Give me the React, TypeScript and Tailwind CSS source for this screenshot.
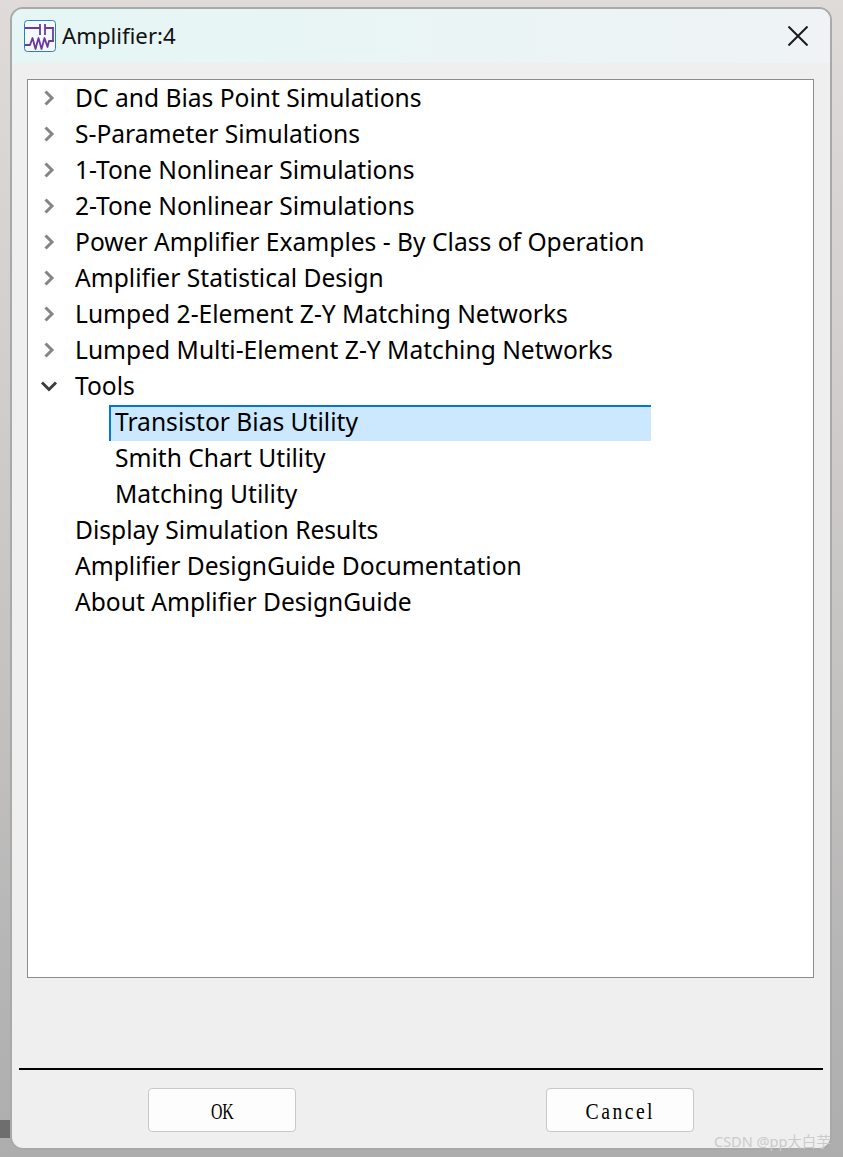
import { ReactNode } from 'react'

const collapsedTop = [
  'DC and Bias Point Simulations',
  'S-Parameter Simulations',
  '1-Tone Nonlinear Simulations',
  '2-Tone Nonlinear Simulations',
  'Power Amplifier Examples - By Class of Operation',
  'Amplifier Statistical Design',
  'Lumped 2-Element Z-Y Matching Networks',
  'Lumped Multi-Element Z-Y Matching Networks',
]

const leafItems = ['Display Simulation Results', 'Amplifier DesignGuide Documentation', 'About Amplifier DesignGuide']

function AppIcon() {
  return (
    <svg width="32" height="32" viewBox="0 0 32 32" fill="none" className="shrink-0">
      <rect x="0.5" y="0.5" width="31" height="31" rx="3" fill="#f4fafc" stroke="#2a7fc0" />
      <g stroke="#6a3aa0" strokeWidth="1.8">
        <path d="M1 8H16M16 4V15M21 4V15M21 8H29V21" />
        <path d="M1 25H6L8.5 18L11.5 29L14.5 18L17.5 29L20.5 18L23.5 27L25 21H30" strokeLinejoin="round" />
      </g>
    </svg>
  )
}

function ChevronRight() {
  return (
    <svg width="12" height="16" viewBox="0 0 12 16" fill="none">
      <path d="M2.5 1.5L9 8L2.5 14.5" stroke="#858585" strokeWidth="3" />
    </svg>
  )
}

function ChevronDown() {
  return (
    <svg width="18" height="12" viewBox="0 0 18 12" fill="none">
      <path d="M2 2.5L9 9.5L16 2.5" stroke="#3c3c3c" strokeWidth="3" />
    </svg>
  )
}

function TreeRow({ icon, children }: { icon?: ReactNode; children: ReactNode }) {
  return (
    <div className="flex h-9 items-center">
      <div className="flex w-[47px] shrink-0 items-center justify-center pr-[6px]">{icon}</div>
      <span>{children}</span>
    </div>
  )
}

function DialogButton({ label, textClass }: { label: string; textClass: string }) {
  return (
    <button className="flex h-[44px] w-[148px] items-center justify-center rounded-[4px] border border-[#c8c8c8] bg-[#fdfdfd] pt-[2px] text-[24px] leading-none text-black [font-family:'Liberation_Serif',serif]">
      <span className={textClass}>{label}</span>
    </button>
  )
}

export default function App() {
  return (
    <div className="relative h-[1157px] w-[843px] overflow-hidden bg-gradient-to-b from-[#dfdbd9] via-[#c9c7c6] to-[#adadad] pl-[10px] pt-[7px]">
      {/* scraps of the window behind */}
      <div className="absolute left-0 top-[1120px] h-[18px] w-[10px] bg-[#6e6e6e]" />

      <div className="relative flex h-[1143px] w-[822px] flex-col overflow-hidden rounded-[13px] border-2 border-[#a9a9a9] bg-[#efefef] [font-family:'Noto_Sans',sans-serif]">
        {/* Title bar */}
        <div className="flex h-[54px] shrink-0 items-center bg-gradient-to-r from-[#e5f6f5] to-[#eff3f5] pl-[12px] pr-[22px]">
          <AppIcon />
          <span className="ml-[6px] flex-1 text-[22.2px] leading-none text-[#111]">Amplifier:4</span>
          <svg width="20" height="20" viewBox="0 0 20 20" fill="none">
            <path d="M0.5 0.5L19.5 19.5M19.5 0.5L0.5 19.5" stroke="#1a1a1a" strokeWidth="2" />
          </svg>
        </div>

        {/* Tree */}
        <div className="ml-[15px] mt-[16px] h-[899px] w-[787px] shrink-0 border border-[#8b8b92] bg-white text-[24.6px] leading-none text-black">
          {collapsedTop.map((item) => (
            <TreeRow key={item} icon={<ChevronRight />}>
              {item}
            </TreeRow>
          ))}
          <TreeRow icon={<ChevronDown />}>Tools</TreeRow>

          <div className="ml-[81px] mt-px flex h-9 w-[542px] items-center border-l-2 border-t-2 border-[#0078d4] bg-[#cce8ff] pb-[3px] pl-[4px]">
            Transistor Bias Utility
          </div>
          <div className="ml-[87px] flex h-[35px] items-center">Smith Chart Utility</div>
          <div className="ml-[87px] flex h-9 items-center">Matching Utility</div>

          {leafItems.map((item) => (
            <TreeRow key={item}>{item}</TreeRow>
          ))}
        </div>

        {/* Footer */}
        <div className="ml-[7px] mt-[90px] h-[2px] w-[804px] shrink-0 bg-black" />
        <div className="ml-[136px] mt-[18px] flex w-[546px] justify-between">
          <DialogButton label="OK" textClass="scale-x-[0.66]" />
          <DialogButton label="Cancel" textClass="scale-x-[0.82] tracking-[3px]" />
        </div>
      </div>

      <div className="absolute left-[714px] top-[1131px] text-[14.5px] leading-[20px] text-[#cbcbcb] [font-family:'Noto_Sans','Noto_Sans_CJK_SC',sans-serif]">
        CSDN @pp大白芋
      </div>
    </div>
  )
}
